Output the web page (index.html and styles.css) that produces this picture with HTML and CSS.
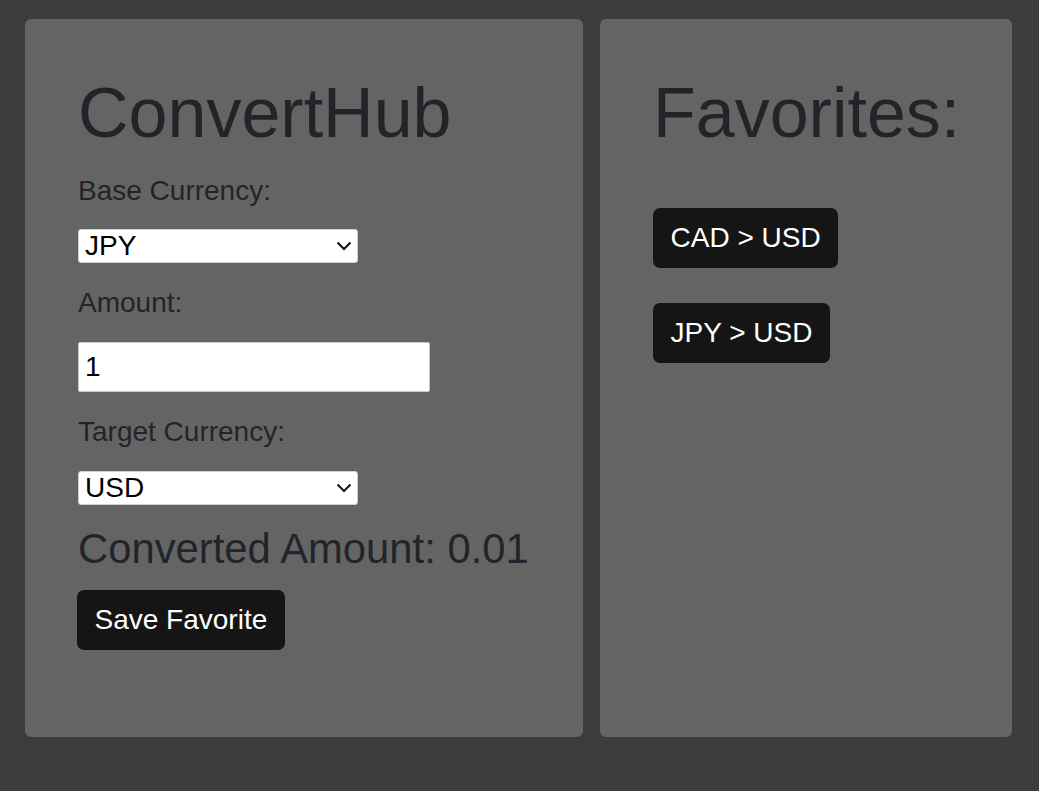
FILE: index.html
```html
<!DOCTYPE html>
<html lang="en">
<head>
<meta charset="utf-8">
<title>ConvertHub</title>
<link rel="stylesheet" href="styles.css">
</head>
<body>
<div class="page">
  <section class="card card-main">
    <h1 class="title">ConvertHub</h1>
    <label class="field-label" for="base">Base Currency:</label>
    <div class="select-wrap">
      <select id="base" class="select">
        <option>JPY</option>
        <option>USD</option>
        <option>CAD</option>
      </select>
      <svg class="chevron" width="16" height="10" viewBox="0 0 16 10" aria-hidden="true"><path d="M1.5 1.5 L8 8 L14.5 1.5" fill="none" stroke="#111" stroke-width="2"/></svg>
    </div>
    <label class="field-label" for="amount">Amount:</label>
    <input id="amount" class="input" type="text" value="1">
    <label class="field-label" for="target">Target Currency:</label>
    <div class="select-wrap">
      <select id="target" class="select">
        <option>USD</option>
        <option>JPY</option>
        <option>CAD</option>
      </select>
      <svg class="chevron" width="16" height="10" viewBox="0 0 16 10" aria-hidden="true"><path d="M1.5 1.5 L8 8 L14.5 1.5" fill="none" stroke="#111" stroke-width="2"/></svg>
    </div>
    <h4 class="result">Converted Amount: 0.01</h4>
    <div class="actions"><button class="btn">Save Favorite</button></div>
  </section>
  <section class="card card-fav">
    <h1 class="title">Favorites:</h1>
    <ul class="fav-list">
      <li><button class="btn">CAD &gt; USD</button></li>
      <li><button class="btn">JPY &gt; USD</button></li>
    </ul>
  </section>
</div>
</body>
</html>
```

FILE: styles.css
```css
html, body {
  margin: 0;
  padding: 0;
  background: #3c3c3c;
  font-family: "Liberation Sans", Arial, sans-serif;
  color: #212529;
}

.page {
  display: flex;
  align-items: flex-start;
  gap: 17px;
  padding: 19px 25px;
}

.card {
  background: #646464;
  border-radius: 6px;
  height: 718px;
  box-sizing: border-box;
  padding: 52px 53px;
  display: flex;
  flex-direction: column;
  align-items: flex-start;
}
.card > * { flex-shrink: 0; }

.card-main { width: 558px; }
.card-fav { width: 412px; }

.title {
  font-size: 70px;
  font-weight: 400;
  line-height: 84px;
  margin: 0 0 15px;
  color: #212529;
  white-space: nowrap;
}

.field-label {
  display: block;
  font-size: 28px;
  line-height: 42px;
  margin: 0 0 18px;
  color: #212529;
}
.card-main > .field-label:first-of-type {
  margin-bottom: 17px;
}

.select-wrap {
  position: relative;
  margin: 0 0 19px;
}

.select {
  display: block;
  -webkit-appearance: none;
  appearance: none;
  width: 280px;
  height: 34px;
  font-family: "Liberation Sans", Arial, sans-serif;
  font-size: 28px;
  line-height: 32px;
  color: #000;
  background: #fff;
  border: 1px solid #d0d0d0;
  border-radius: 3px;
  padding: 0 30px 0 6px;
  margin: 0;
  box-sizing: border-box;
}

.chevron {
  position: absolute;
  right: 6px;
  top: 12px;
  pointer-events: none;
}

.input {
  display: block;
  width: 352px;
  height: 50px;
  box-sizing: border-box;
  font-family: "Liberation Sans", Arial, sans-serif;
  font-size: 28px;
  color: #000;
  background: #fff;
  border: 1px solid #c8c8c8;
  border-radius: 2px;
  padding: 0 6px;
  margin: 0 0 19px;
}

.result {
  font-size: 41.8px;
  font-weight: 400;
  line-height: 50px;
  margin: 0 0 16px;
  color: #212529;
  white-space: nowrap;
}

.btn {
  font-family: "Liberation Sans", Arial, sans-serif;
  font-size: 28px;
  line-height: 42px;
  color: #fff;
  background: #151515;
  border: none;
  border-radius: 7px;
  padding: 9px 17.5px;
  cursor: pointer;
}
.actions .btn {
  margin-left: -1px;
}

.fav-list {
  list-style: none;
  margin: 38px 0 0;
  padding: 0;
}
.fav-list li {
  margin: 0 0 35px;
}
```
